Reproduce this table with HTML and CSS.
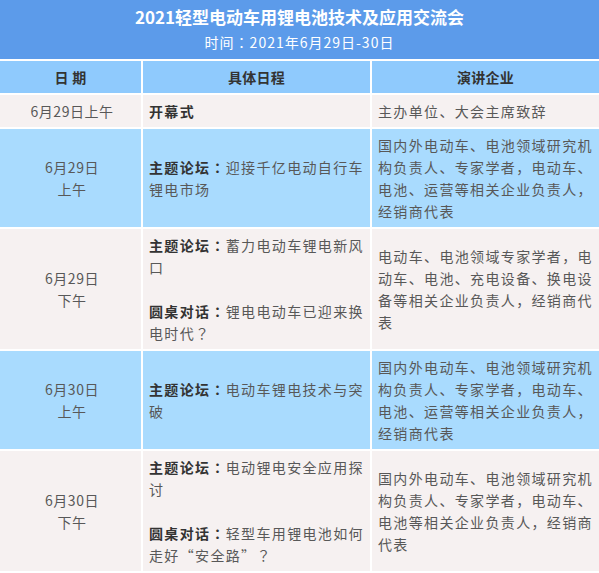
FILE: index.html
```html
<!DOCTYPE html>
<html lang="zh-CN">
<head>
<meta charset="utf-8">
<title>2021轻型电动车用锂电池技术及应用交流会</title>
<link rel="stylesheet" href="styles.css">
</head>
<body>
<table class="agenda">
  <colgroup>
    <col class="c-date">
    <col class="c-prog">
    <col class="c-org">
  </colgroup>
  <thead>
    <tr>
      <th colspan="3" class="title-cell">
        <div class="title">2021轻型电动车用锂电池技术及应用交流会</div>
        <div class="subtitle">时间<span class="punct" lang="zh-Hant">：</span>2021年6月29日-30日</div>
      </th>
    </tr>
    <tr class="head">
      <th>日 期</th>
      <th>具体日程</th>
      <th>演讲企业</th>
    </tr>
  </thead>
  <tbody>
    <tr class="pink">
      <td class="date">6月29日上午</td>
      <td class="prog"><b>开幕式</b></td>
      <td class="org">主办单位、大会主席致辞</td>
    </tr>
    <tr class="blue">
      <td class="date">6月29日<br>上午</td>
      <td class="prog"><p><b>主题论坛<span class="punct" lang="zh-Hant">：</span></b>迎接千亿电动自行车锂电市场</p></td>
      <td class="org">国内外电动车、电池领域研究机构负责人、专家学者，电动车、电池、运营等相关企业负责人，经销商代表</td>
    </tr>
    <tr class="pink">
      <td class="date">6月29日<br>下午</td>
      <td class="prog"><p><b>主题论坛<span class="punct" lang="zh-Hant">：</span></b>蓄力电动车锂电新风口</p><p><b>圆桌对话<span class="punct" lang="zh-Hant">：</span></b>锂电电动车已迎来换电时代<span class="punct" lang="zh-Hant">？</span></p></td>
      <td class="org">电动车、电池领域专家学者，电动车、电池、充电设备、换电设备等相关企业负责人，经销商代表</td>
    </tr>
    <tr class="blue">
      <td class="date">6月30日<br>上午</td>
      <td class="prog"><p><b>主题论坛<span class="punct" lang="zh-Hant">：</span></b>电动车锂电技术与突破</p></td>
      <td class="org">国内外电动车、电池领域研究机构负责人、专家学者，电动车、电池、运营等相关企业负责人，经销商代表</td>
    </tr>
    <tr class="pink">
      <td class="date">6月30日<br>下午</td>
      <td class="prog"><p><b>主题论坛<span class="punct" lang="zh-Hant">：</span></b>电动锂电安全应用探讨</p><p><b>圆桌对话<span class="punct" lang="zh-Hant">：</span></b>轻型车用锂电池如何走好“安全路”<span class="punct" lang="zh-Hant">？</span></p></td>
      <td class="org">国内外电动车、电池领域研究机构负责人、专家学者，电动车、电池等相关企业负责人，经销商代表</td>
    </tr>
  </tbody>
</table>
</body>
</html>
```

FILE: styles.css
```css
html, body {
  margin: 0;
  padding: 0;
  background: #ffffff;
}

body {
  font-family: "Noto Sans CJK SC", "Noto Sans", sans-serif;
  font-size: 14px;
  color: #585858;
}

.agenda {
  width: 599px;
  table-layout: fixed;
  border-collapse: separate;
  border-spacing: 0;
}

.c-date { width: 143px; }
.c-prog { width: 229px; }
.c-org  { width: 227px; }

.agenda th,
.agenda td {
  border-bottom: 2px solid #ffffff;
  border-right: 2px solid #ffffff;
  padding: 5px 3px 5px 6px;
  line-height: 22px;
  vertical-align: middle;
  font-weight: normal;
}

.agenda th:last-child,
.agenda td:last-child {
  border-right: 0;
}

.agenda .title-cell {
  background: #5c9bea;
  color: #ffffff;
  text-align: center;
  padding: 4px 0 4px 0;
  border-right: 0;
}

.title {
  font-size: 17px;
  font-weight: bold;
  line-height: 26px;
}

.subtitle {
  font-size: 14px;
  line-height: 25px;
  letter-spacing: 1px;
}

.punct {
  font-family: "Noto Sans CJK TC", "Noto Sans CJK SC", sans-serif;
}

.head th {
  background: #8fcafd;
  color: #333333;
  font-weight: bold;
  text-align: center;
  letter-spacing: 0.3px;
  padding: 5px 0;
}

.pink td { background: #f6f1f1; }
.blue td { background: #a9dbfe; }

.date {
  text-align: center;
  letter-spacing: 0.5px;
  padding-left: 0;
  padding-right: 0;
}

.prog,
.org {
  letter-spacing: 1.35px;
  text-align: left;
}

.prog p {
  margin: 0;
}

.prog p + p {
  margin-top: 22px;
}

.prog b {
  color: #333333;
  font-weight: bold;
}
```
